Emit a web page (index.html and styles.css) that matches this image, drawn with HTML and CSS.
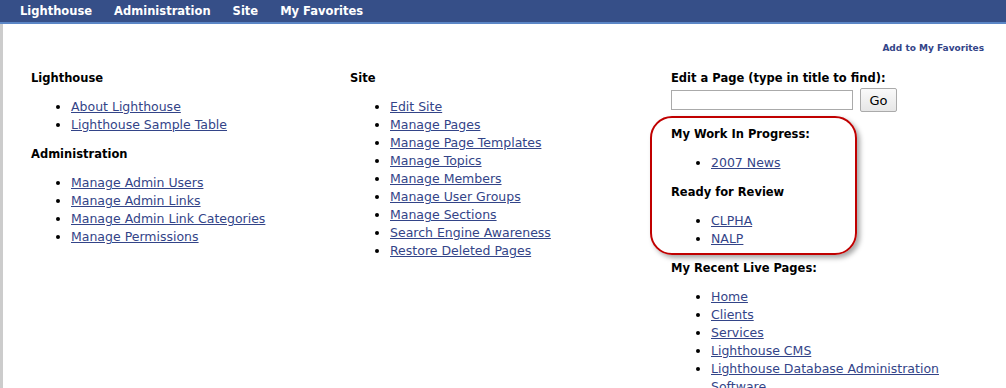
FILE: index.html
```html
<!DOCTYPE html>
<html lang="en">
<head>
  <meta charset="UTF-8">
  <title>Lighthouse Administration</title>
  <link rel="stylesheet" href="styles.css">
</head>
<body>

<div id="nav">
  <a href="#">Lighthouse</a>
  <a href="#">Administration</a>
  <a href="#">Site</a>
  <a href="#">My Favorites</a>
</div>

<div id="main">
  <div class="fav-row"><a href="#">Add to My Favorites</a></div>

  <div class="columns">
    <div class="col">
      <h3>Lighthouse</h3>
      <ul>
        <li><a href="#">About Lighthouse</a></li>
        <li><a href="#">Lighthouse Sample Table</a></li>
      </ul>
      <h3>Administration</h3>
      <ul>
        <li><a href="#">Manage Admin Users</a></li>
        <li><a href="#">Manage Admin Links</a></li>
        <li><a href="#">Manage Admin Link Categories</a></li>
        <li><a href="#">Manage Permissions</a></li>
      </ul>
    </div>

    <div class="col">
      <h3>Site</h3>
      <ul>
        <li><a href="#">Edit Site</a></li>
        <li><a href="#">Manage Pages</a></li>
        <li><a href="#">Manage Page Templates</a></li>
        <li><a href="#">Manage Topics</a></li>
        <li><a href="#">Manage Members</a></li>
        <li><a href="#">Manage User Groups</a></li>
        <li><a href="#">Manage Sections</a></li>
        <li><a href="#">Search Engine Awareness</a></li>
        <li><a href="#">Restore Deleted Pages</a></li>
      </ul>
    </div>

    <div class="col col-right">
      <h3>Edit a Page (type in title to find):</h3>
      <form class="find">
        <input type="text">
        <button type="button">Go</button>
      </form>

      <div class="review-box">
        <h3>My Work In Progress:</h3>
        <ul>
          <li><a href="#">2007 News</a></li>
        </ul>
        <h3>Ready for Review</h3>
        <ul>
          <li><a href="#">CLPHA</a></li>
          <li><a href="#">NALP</a></li>
        </ul>
      </div>

      <h3 class="recent">My Recent Live Pages:</h3>
      <ul>
        <li><a href="#">Home</a></li>
        <li><a href="#">Clients</a></li>
        <li><a href="#">Services</a></li>
        <li><a href="#">Lighthouse CMS</a></li>
        <li><a href="#">Lighthouse Database Administration Software</a></li>
      </ul>
    </div>
  </div>
</div>

</body>
</html>
```

FILE: styles.css
```css
body {
  font-family: 'DejaVu Sans', Verdana, sans-serif;
  font-size: 12.5px;
  margin: 0;
  padding: 0;
  color: #000;
  background: #fff;
  overflow: hidden;
}
#nav {
  background: #364f88;
  border-bottom: 2px solid #5b86c6;
  height: 22px;
  padding-left: 20px;
  display: flex;
  gap: 22px;
  align-items: center;
}
#nav a {
  color: #fff;
  font-weight: bold;
  font-size: 11.5px;
  text-decoration: none;
}
#main {
  border-left: 3px solid #cccccc;
  min-height: 400px;
  padding: 16px 22px 0 28px;
}
.fav-row {
  text-align: right;
  line-height: 14px;
}
.fav-row a {
  font-size: 9px;
  font-weight: bold;
  color: #334488;
  text-decoration: none;
}
.columns {
  display: grid;
  grid-template-columns: 319px 321px 1fr;
  margin-top: 14px;
}
h3 {
  font-size: 11.5px;
  line-height: 18px;
  margin: 0;
}
ul {
  margin: 11px 0;
  padding-left: 40px;
}
li {
  line-height: 18px;
}
a {
  color: #334488;
}
.col-right {
  padding-right: 20px;
}
.find {
  display: flex;
  align-items: center;
  gap: 7px;
  margin: 1px 0 4px;
}
.find input {
  width: 178px;
  height: 16px;
  border: 1px solid #aaa;
  padding: 1px;
  margin: 0;
}
.find button {
  font-family: 'DejaVu Sans', Verdana, sans-serif;
  font-size: 13px;
  width: 37px;
  height: 24px;
  border: 1px solid #aaa;
  border-radius: 2px;
  background: linear-gradient(#fafafa, #e6e6e6);
  padding: 0;
}
.review-box {
  margin-left: -21px;
  width: 184px;
  padding: 7px 0 5px 19px;
  border: 2px solid #c00000;
  border-radius: 22px;
  box-shadow: 3px 3px 5px rgba(0, 0, 0, 0.35);
}
.review-box ul:last-child {
  margin-bottom: 0;
}
.recent {
  margin-top: 4px;
}
```
